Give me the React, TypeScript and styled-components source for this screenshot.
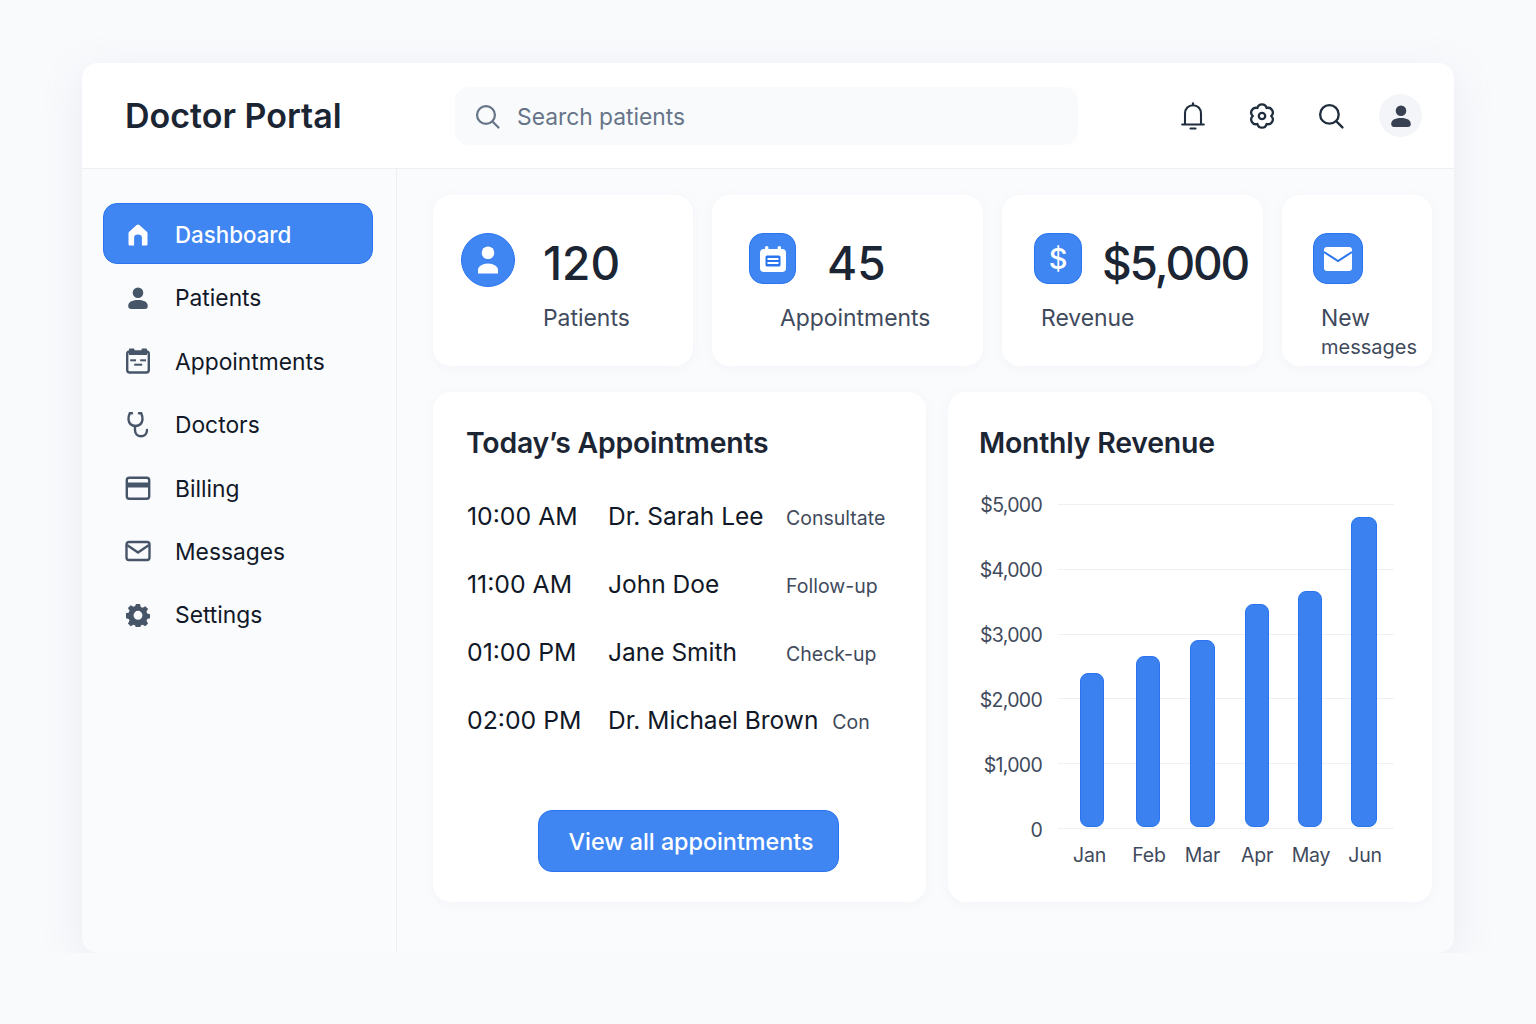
import { ReactNode } from 'react';
import styled, { createGlobalStyle } from 'styled-components';

const GlobalStyle = createGlobalStyle`
  html, body {
    margin: 0;
    background: #f9fafc;
    font-family: Inter, "Liberation Sans", sans-serif;
    color: #111827;
  }
  * { box-sizing: border-box; }
`;

const navIconColor = '#475569';

const HomeIcon = () => (
  <svg width="24" height="24" viewBox="0 0 24 24">
    <path fill="#fff" d="M12 1.500c.5 0 1 .2 1.400.6l7.400 6.600c.5.4.7 1 .7 1.600V21c0 1-.7 1.600-1.600 1.600h-4V14.500c0-1.800-1.200-3-3.900-3s-3.900 1.200-3.900 3v8.100h-4c-.9 0-1.600-.6-1.600-1.600V10.300c0-.6.2-1.200.7-1.600l7.400-6.600c.4-.4.900-.6 1.400-.6z" />
  </svg>
);

const PersonIcon = ({ color = navIconColor, size = 24 }: { color?: string; size?: number }) => (
  <svg width={size} height={size} viewBox="0 0 24 24">
    <circle cx="12" cy="6.800" r="5.300" fill={color} />
    <path fill={color} d="M2.200 20c0-3.800 3.400-6 9.800-6s9.800 2.200 9.800 6c0 2-1 3-3 3H5.200c-2 0-3-1-3-3z" />
  </svg>
);

const CalendarIcon = () => (
  <svg width="24" height="26" viewBox="0 0 24 26" fill="none">
    <rect x="1.200" y="3.500" width="21.600" height="21" rx="2.500" stroke={navIconColor} strokeWidth="2.400" />
    <path fill={navIconColor} d="M3 1.500c0-.6.4-1 1-1h3.500c.6 0 1 .4 1 1V3h7V1.500c0-.6.4-1 1-1H20c.6 0 1 .4 1 1V7H3z" />
    <rect x="4.200" y="11.300" width="5.800" height="2" fill={navIconColor} />
    <rect x="14.200" y="11.300" width="5.800" height="2" fill={navIconColor} />
    <rect x="8.200" y="15.700" width="8" height="2" fill={navIconColor} />
  </svg>
);

const StethoscopeIcon = () => (
  <svg width="22" height="26" viewBox="0 0 22 26" fill="none" stroke={navIconColor} strokeWidth="2.400" strokeLinecap="round">
    <path d="M5 1.300H2.800C1.800 3.500 1.300 5.500 1.500 7.500 2 11.500 4.500 14 8.500 14s6.500-2.500 7-6.500c.2-2-.3-4-1.300-6.200H12" />
    <path d="M8 14v4c0 3.800 2.700 6.300 6 6.300s6-2.500 6-6.300" />
  </svg>
);

const CardIcon = () => (
  <svg width="26" height="26" viewBox="0 0 26 26" fill="none">
    <rect x="1.800" y="2.800" width="22.400" height="21" rx="2.500" stroke={navIconColor} strokeWidth="2.400" />
    <rect x="2" y="7.500" width="22" height="5" fill={navIconColor} />
  </svg>
);

const MailIcon = () => (
  <svg width="26" height="22" viewBox="0 0 26 22" fill="none" stroke={navIconColor} strokeWidth="2.400">
    <rect x="1.500" y="2" width="23" height="18" rx="2.400" />
    <path d="M2 5l11 7.500L24 5" />
  </svg>
);

const SolidGearIcon = () => (
  <svg width="24" height="24" viewBox="0 0 26 26">
    <path
      fillRule="evenodd"
      fill={navIconColor}
      d="M10.800 1h4.400l.8 3.200 2 .9 2.900-1.700 3 3.100-1.700 2.800.8 2.100 3.200.8v4.200l-3.200.8-.8 2.100 1.700 2.800-3 3.100-2.900-1.700-2 .9-.8 3.200h-4.400l-.8-3.200-2-.9-2.900 1.700-3-3.100 1.700-2.800-.8-2.100-3.200-.8V11.200l3.200-.8.800-2.100L2.100 5.500l3-3.100L8 4.100l2-.9.800-2.200zM13 8.500a4.800 4.800 0 1 0 0 9.600 4.800 4.800 0 0 0 0-9.600z"
    />
  </svg>
);

const SearchGlass = ({ color, size }: { color: string; size: number }) => (
  <svg width={size} height={size} viewBox="0 0 28 28" fill="none" stroke={color} strokeWidth="2.500" strokeLinecap="round">
    <circle cx="12.300" cy="12.300" r="10" />
    <path d="M19.800 19.800l6.500 6.500" />
  </svg>
);

const BellIcon = () => (
  <svg width="24" height="28" viewBox="0 0 24 28" fill="none" stroke="#1f2d3d" strokeWidth="2.100" strokeLinecap="round" strokeLinejoin="round">
    <path d="M12 1.200v2" />
    <path d="M4 22V11.500C4 6.800 7.500 3.200 12 3.200s8 3.600 8 8.300V22" />
    <path d="M1.200 22.500h21.600" />
    <path d="M9.500 26.500h5" />
  </svg>
);

const FlowerGearIcon = () => (
  <svg width="28" height="28" viewBox="0 0 28 28" fill="none" stroke="#1f2d3d" strokeWidth="2.300" strokeLinejoin="round">
    <path d="M18.600 6.030A4.700 4.700 0 0 1 23.200 14A4.700 4.700 0 0 1 18.600 21.970A4.700 4.700 0 0 1 9.400 21.970A4.700 4.700 0 0 1 4.800 14A4.700 4.700 0 0 1 9.400 6.030A4.700 4.700 0 0 1 18.600 6.030z" />
    <circle cx="14" cy="14" r="3.200" />
  </svg>
);

const StatPersonIcon = () => (
  <svg width="22" height="28" viewBox="0 0 22 28">
    <circle cx="11" cy="6.800" r="6.300" fill="#fff" />
    <path fill="#fff" d="M1 27.500v-3.500c0-3.400 4.200-6.500 10-6.500s10 3.100 10 6.500v3.500z" />
  </svg>
);

const StatCalendarIcon = () => (
  <svg width="28" height="28" viewBox="0 0 28 28">
    <rect x="1" y="4" width="26" height="23" rx="4" fill="#fff" />
    <rect x="6" y="1" width="3.400" height="6" rx="1.500" fill="#fff" />
    <rect x="18.600" y="1" width="3.400" height="6" rx="1.500" fill="#fff" />
    <rect x="6.500" y="10.500" width="15" height="11" rx="1.500" fill="#2b74ef" />
    <rect x="8.500" y="13" width="11" height="2" fill="#fff" />
    <rect x="8.500" y="17" width="11" height="2" fill="#fff" />
  </svg>
);

const StatMailIcon = () => (
  <svg width="30" height="26" viewBox="0 0 30 26">
    <rect x="1" y="1" width="28" height="24" rx="3" fill="#fff" />
    <path d="M1 6l14 9 14-9" fill="none" stroke="#2b74ef" strokeWidth="2" />
  </svg>
);

const Shell = styled.div`
  width: 1372px;
  height: 890px;
  margin: 63px 0 0 82px;
  background: #fafbfd;
  border-radius: 16px;
  box-shadow: 0 10px 40px rgba(148, 163, 184, 0.16);
  display: flex;
  flex-direction: column;
  overflow: hidden;
`;

const Header = styled.header`
  height: 106px;
  flex: none;
  background: #fff;
  border-bottom: 1px solid #eef0f5;
  display: flex;
  align-items: center;
  padding: 0 32px 0 43px;
`;

const Title = styled.h1`
  width: 330px;
  margin: 0;
  font-size: 34px;
  font-weight: 600;
  color: #1b2533;
`;

const SearchBox = styled.div`
  width: 623px;
  height: 58px;
  margin-top: 1px;
  background: #f8fafc;
  border-radius: 14px;
  display: flex;
  align-items: center;
  gap: 17px;
  padding-left: 20px;
  font-size: 22.800px;
  color: #667488;
`;

const HeaderIcons = styled.div`
  margin-left: auto;
  display: flex;
  align-items: center;
`;

const HeaderIcon = styled.div`
  width: 69px;
  display: flex;
  justify-content: center;
`;

const Avatar = styled.div`
  width: 43px;
  height: 43px;
  margin-left: 14px;
  border-radius: 50%;
  background: #f3f5f9;
  display: flex;
  align-items: center;
  justify-content: center;
`;

const Body = styled.div`
  flex: 1;
  display: flex;
  min-height: 0;
`;

const Sidebar = styled.nav`
  width: 315px;
  flex: none;
  border-right: 1px solid #eef0f5;
  padding: 34px 23px 0 21px;
  display: flex;
  flex-direction: column;
  gap: 2.400px;
`;

const NavItem = styled.div<{ $active?: boolean }>`
  height: 61px;
  padding-top: 2px;
  display: flex;
  align-items: center;
  border-radius: 14px;
  font-size: ${(p) => (p.$active ? 22.300 : 22.800)}px;
  font-weight: ${(p) => (p.$active ? 500 : 400)};
  color: ${(p) => (p.$active ? '#fff' : '#111827')};
  background: ${(p) => (p.$active ? '#3f86f2' : 'transparent')};
  border: 1px solid ${(p) => (p.$active ? '#2b74ef' : 'transparent')};
`;

const NavIconSlot = styled.span`
  width: 71px;
  flex: none;
  padding-right: 3px;
  display: flex;
  justify-content: center;
`;

const Main = styled.main`
  flex: 1;
  min-width: 0;
  padding: 26px 22px 0 36px;
  display: flex;
  flex-direction: column;
  gap: 26px;
`;

const StatRow = styled.section`
  display: flex;
  gap: 19px;
`;

const Card = styled.div`
  background: #fff;
  border-radius: 18px;
  box-shadow: 0 2px 12px rgba(148, 163, 184, 0.08);
`;

const StatCard = styled(Card)<{ $width: number; $pad: number }>`
  width: ${(p) => p.$width}px;
  height: 171px;
  flex: none;
  padding: 38px 0 0 ${(p) => p.$pad}px;
  overflow: hidden;
`;

const StatTop = styled.div<{ $gap: number }>`
  min-height: 60px;
  display: flex;
  align-items: flex-start;
  gap: ${(p) => p.$gap}px;
`;

const StatIcon = styled.div<{ $w: number; $h: number; $round?: boolean }>`
  width: ${(p) => p.$w}px;
  height: ${(p) => p.$h}px;
  flex: none;
  display: flex;
  align-items: center;
  justify-content: center;
  background: #3f86f2;
  border: 1px solid #2b74ef;
  border-radius: ${(p) => (p.$round ? '50%' : '14px')};
`;

const StatValue = styled.div<{ $tight?: boolean }>`
  font-size: 46px;
  line-height: 60px;
  font-weight: ${(p) => (p.$tight ? 450 : 500)};
  letter-spacing: ${(p) => (p.$tight ? '-2.100px' : '0')};
  color: #1b2533;
  white-space: nowrap;
`;

const StatLabel = styled.div<{ $indent: number }>`
  margin: 9px 0 0 ${(p) => p.$indent}px;
  font-size: 22.900px;
  line-height: 32px;
  color: #3f4a5c;
`;

const StatSubLabel = styled.div<{ $indent: number }>`
  margin: -3px 0 0 ${(p) => p.$indent}px;
  font-size: 20px;
  line-height: 32px;
  color: #3f4a5c;
`;

const DollarGlyph = styled.span`
  color: #fff;
  font-size: 29px;
  font-weight: 500;
`;

const LowerRow = styled.section`
  display: flex;
  gap: 22px;
`;

const Panel = styled(Card)<{ $width: number; $pad: number }>`
  width: ${(p) => p.$width}px;
  height: 510px;
  flex: none;
  padding: 32px 0 0 ${(p) => p.$pad}px;
`;

const PanelTitle = styled.h2`
  margin: 0 0 0 -1px;
  font-size: 28.400px;
  line-height: 38px;
  font-weight: 600;
  color: #1b2533;
  letter-spacing: -0.200px;
`;

const ApptList = styled.div`
  margin-top: 20px;
  display: flex;
  flex-direction: column;
`;

const ApptRow = styled.div`
  height: 68px;
  display: flex;
  align-items: center;
`;

const ApptTime = styled.span`
  width: 141px;
  flex: none;
  font-size: 24.800px;
  color: #111827;
`;

const ApptName = styled.span`
  min-width: 178px;
  padding-right: 14px;
  font-size: 24.500px;
  color: #111827;
  white-space: nowrap;
`;

const ApptType = styled.span`
  margin-top: 4px;
  font-size: 19.500px;
  color: #3f4a5c;
`;

const ButtonRow = styled.div`
  margin-top: 56px;
  padding-left: 71px;
`;

const PrimaryButton = styled.button`
  width: 301px;
  height: 62px;
  padding: 0 0 0 5px;
  background: #3f86f2;
  border: 1px solid #2b74ef;
  border-radius: 14px;
  color: #fff;
  font-family: inherit;
  font-size: 23.300px;
  font-weight: 500;
`;

const Chart = styled.div`
  margin-top: 42px;
  margin-left: -1px;
  display: flex;
`;

const YAxis = styled.div`
  width: 63px;
  height: 325px;
  flex: none;
  margin-top: 1px;
  display: flex;
  flex-direction: column;
  justify-content: space-between;
  align-items: flex-end;
  font-size: 19.500px;
  letter-spacing: -0.700px;
  line-height: 0;
  color: #3f4a5c;
`;

const Plot = styled.div`
  width: 336px;
  margin-left: 16px;
  position: relative;
`;

const GridLines = styled.div`
  position: absolute;
  top: 0;
  left: 0;
  right: 0;
  height: 325px;
  display: flex;
  flex-direction: column;
  justify-content: space-between;
`;

const GridLine = styled.div`
  height: 1px;
  background: #eef0f4;
`;

const Months = styled.div`
  position: relative;
  display: flex;
  padding-left: 6px;
`;

const MonthCol = styled.div<{ $width: number }>`
  width: ${(p) => p.$width}px;
  display: flex;
  flex-direction: column;
  align-items: center;
`;

const BarTrack = styled.div`
  height: 323px;
  display: flex;
  align-items: flex-end;
`;

const Bar = styled.div<{ $width: number }>`
  width: ${(p) => p.$width}px;
  background: #3b82f0;
  border: 1px solid #2b74ef;
  border-radius: 8px;
`;

const MonthLabel = styled.div<{ $nudge: number }>`
  margin: 16px 0 0 ${(p) => p.$nudge}px;
  font-size: 19.500px;
  letter-spacing: -0.200px;
  line-height: 24px;
  color: #3f4a5c;
`;

const navItems: { label: string; icon: ReactNode; active?: boolean }[] = [
  { label: 'Dashboard', icon: <HomeIcon />, active: true },
  { label: 'Patients', icon: <PersonIcon /> },
  { label: 'Appointments', icon: <CalendarIcon /> },
  { label: 'Doctors', icon: <StethoscopeIcon /> },
  { label: 'Billing', icon: <CardIcon /> },
  { label: 'Messages', icon: <MailIcon /> },
  { label: 'Settings', icon: <SolidGearIcon /> },
];

const appointments = [
  { time: '10:00 AM', name: 'Dr. Sarah Lee', type: 'Consultate' },
  { time: '11:00 AM', name: 'John Doe', type: 'Follow-up' },
  { time: '01:00 PM', name: 'Jane Smith', type: 'Check-up' },
  { time: '02:00 PM', name: 'Dr. Michael Brown', type: 'Con' },
];

const revenue = [
  { month: 'Jan', height: 154, col: 56, bar: 24, nudge: -5 },
  { month: 'Feb', height: 171, col: 56, bar: 24, nudge: 2 },
  { month: 'Mar', height: 187, col: 53, bar: 25, nudge: 0 },
  { month: 'Apr', height: 223, col: 56, bar: 24, nudge: 0 },
  { month: 'May', height: 236, col: 50, bar: 24, nudge: 2 },
  { month: 'Jun', height: 310, col: 58, bar: 26, nudge: 2 },
];

const yTicks = ['$5,000', '$4,000', '$3,000', '$2,000', '$1,000', '0'];

export default function App() {
  return (
    <>
      <GlobalStyle />
      <Shell>
        <Header>
          <Title>Doctor Portal</Title>
          <SearchBox>
            <SearchGlass color="#667488" size={25} />
            Search patients
          </SearchBox>
          <HeaderIcons>
            <HeaderIcon><BellIcon /></HeaderIcon>
            <HeaderIcon><FlowerGearIcon /></HeaderIcon>
            <HeaderIcon><SearchGlass color="#1f2d3d" size={26} /></HeaderIcon>
            <Avatar><PersonIcon color="#374151" size={24} /></Avatar>
          </HeaderIcons>
        </Header>
        <Body>
          <Sidebar>
            {navItems.map((item) => (
              <NavItem key={item.label} $active={item.active}>
                <NavIconSlot>{item.icon}</NavIconSlot>
                {item.label}
              </NavItem>
            ))}
          </Sidebar>
          <Main>
            <StatRow>
              <StatCard $width={260} $pad={28}>
                <StatTop $gap={28}>
                  <StatIcon $w={54} $h={54} $round>
                    <StatPersonIcon />
                  </StatIcon>
                  <StatValue>120</StatValue>
                </StatTop>
                <StatLabel $indent={82}>Patients</StatLabel>
              </StatCard>
              <StatCard $width={271} $pad={37}>
                <StatTop $gap={31}>
                  <StatIcon $w={47} $h={51}>
                    <StatCalendarIcon />
                  </StatIcon>
                  <StatValue>45</StatValue>
                </StatTop>
                <StatLabel $indent={31}>Appointments</StatLabel>
              </StatCard>
              <StatCard $width={261} $pad={32}>
                <StatTop $gap={20}>
                  <StatIcon $w={48} $h={51}>
                    <DollarGlyph>$</DollarGlyph>
                  </StatIcon>
                  <StatValue $tight>$5,000</StatValue>
                </StatTop>
                <StatLabel $indent={7}>Revenue</StatLabel>
              </StatCard>
              <StatCard $width={150} $pad={31}>
                <StatTop $gap={0}>
                  <StatIcon $w={50} $h={51}>
                    <StatMailIcon />
                  </StatIcon>
                </StatTop>
                <StatLabel $indent={8}>New</StatLabel>
                <StatSubLabel $indent={8}>messages</StatSubLabel>
              </StatCard>
            </StatRow>
            <LowerRow>
              <Panel $width={493} $pad={34}>
                <PanelTitle>Today’s Appointments</PanelTitle>
                <ApptList>
                  {appointments.map((a) => (
                    <ApptRow key={a.time}>
                      <ApptTime>{a.time}</ApptTime>
                      <ApptName>{a.name}</ApptName>
                      <ApptType>{a.type}</ApptType>
                    </ApptRow>
                  ))}
                </ApptList>
                <ButtonRow>
                  <PrimaryButton>View all appointments</PrimaryButton>
                </ButtonRow>
              </Panel>
              <Panel $width={484} $pad={32}>
                <PanelTitle>Monthly Revenue</PanelTitle>
                <Chart>
                  <YAxis>
                    {yTicks.map((t) => (
                      <span key={t}>{t}</span>
                    ))}
                  </YAxis>
                  <Plot>
                    <GridLines>
                      {yTicks.map((t) => (
                        <GridLine key={t} />
                      ))}
                    </GridLines>
                    <Months>
                      {revenue.map((r) => (
                        <MonthCol key={r.month} $width={r.col}>
                          <BarTrack>
                            <Bar $width={r.bar} style={{ height: r.height }} />
                          </BarTrack>
                          <MonthLabel $nudge={r.nudge}>{r.month}</MonthLabel>
                        </MonthCol>
                      ))}
                    </Months>
                  </Plot>
                </Chart>
              </Panel>
            </LowerRow>
          </Main>
        </Body>
      </Shell>
    </>
  );
}
